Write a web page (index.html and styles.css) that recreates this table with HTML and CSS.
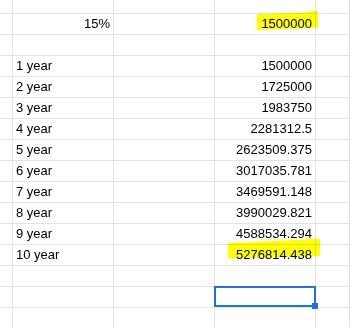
FILE: index.html
```html
<!DOCTYPE html>
<html>
<head>
<meta charset="utf-8">
<link rel="stylesheet" href="styles.css">
</head>
<body>
<div class="sheet">
  <div class="grid">
    <!-- row 0 -->
    <div class="c"></div><div class="c"></div><div class="c"></div><div class="c"></div><div class="c"></div>
    <!-- row 1 -->
    <div class="c"></div><div class="c r">15%</div><div class="c"></div><div class="c r">1500000</div><div class="c"></div>
    <!-- row 2 -->
    <div class="c"></div><div class="c"></div><div class="c"></div><div class="c"></div><div class="c"></div>
    <!-- rows 3-12 -->
    <div class="c"></div><div class="c">1 year</div><div class="c"></div><div class="c r">1500000</div><div class="c"></div>
    <div class="c"></div><div class="c">2 year</div><div class="c"></div><div class="c r">1725000</div><div class="c"></div>
    <div class="c"></div><div class="c">3 year</div><div class="c"></div><div class="c r">1983750</div><div class="c"></div>
    <div class="c"></div><div class="c">4 year</div><div class="c"></div><div class="c r">2281312.5</div><div class="c"></div>
    <div class="c"></div><div class="c">5 year</div><div class="c"></div><div class="c r">2623509.375</div><div class="c"></div>
    <div class="c"></div><div class="c">6 year</div><div class="c"></div><div class="c r">3017035.781</div><div class="c"></div>
    <div class="c"></div><div class="c">7 year</div><div class="c"></div><div class="c r">3469591.148</div><div class="c"></div>
    <div class="c"></div><div class="c">8 year</div><div class="c"></div><div class="c r">3990029.821</div><div class="c"></div>
    <div class="c"></div><div class="c">9 year</div><div class="c"></div><div class="c r">4588534.294</div><div class="c"></div>
    <div class="c"></div><div class="c">10 year</div><div class="c"></div><div class="c r">5276814.438</div><div class="c"></div>
    <!-- row 13 -->
    <div class="c"></div><div class="c"></div><div class="c"></div><div class="c"></div><div class="c"></div>
    <!-- row 14 -->
    <div class="c"></div><div class="c"></div><div class="c"></div><div class="c sel"><span class="sel-box"><span class="handle"></span></span></div><div class="c"></div>
    <!-- row 15 -->
    <div class="c"></div><div class="c"></div><div class="c"></div><div class="c"></div><div class="c"></div>
  </div>
  <svg class="marks" width="350" height="327" viewBox="0 0 350 327">
    <polygon points="257,14 285,13.2 305,12.4 312,11.2 316,10.8 318,11.5 318,27.8 300,28.6 280,29.3 257,30" fill="#ffff00"/>
    <polygon points="228,243 250,242.2 270,241.3 290,240.3 305,239.5 314,238.8 320,239 320,256 300,256.8 270,257.6 228,258.5" fill="#ffff00"/>
  </svg>
</div>
</body>
</html>
```

FILE: styles.css
```css
html, body {
  margin: 0;
  padding: 0;
  background: #ffffff;
}

.sheet {
  position: relative;
  width: 350px;
  height: 327px;
  overflow: hidden;
}

.grid {
  display: grid;
  grid-template-columns: 13px 101px 101px 101px 34px;
  grid-template-rows: 14px repeat(14, 21px) 21px;
  font-family: "Liberation Sans", Arial, sans-serif;
  font-size: 13px;
  color: #000000;
}

.c {
  box-sizing: border-box;
  border-right: 1px solid #e2e3e3;
  border-bottom: 1px solid #e2e3e3;
  padding: 0 3px;
  line-height: 20px;
  white-space: nowrap;
  overflow: visible;
}

.r {
  text-align: right;
}

.sel {
  position: relative;
}

.sel-box {
  position: absolute;
  left: -1px;
  top: -1px;
  width: 102px;
  height: 21px;
  box-sizing: border-box;
  border: 2px solid #1a73e8;
  z-index: 2;
}

.handle {
  position: absolute;
  left: 96px;
  top: 15px;
  width: 6px;
  height: 6px;
  background: #1a73e8;
}

.marks {
  position: absolute;
  left: 0;
  top: 0;
  pointer-events: none;
  mix-blend-mode: multiply;
}
```
